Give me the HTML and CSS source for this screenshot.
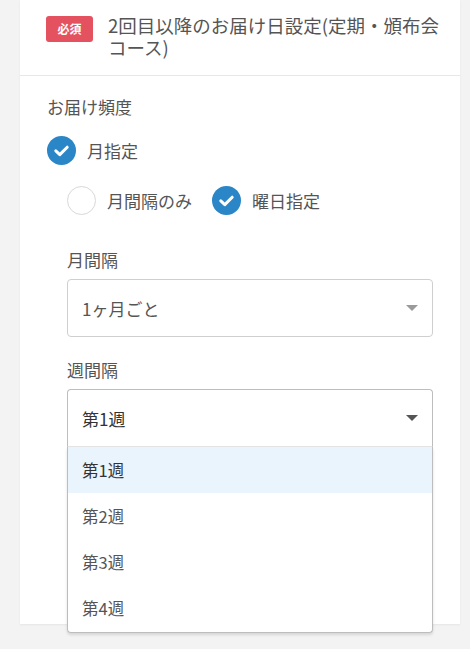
FILE: index.html
```html
<!DOCTYPE html>
<html lang="ja">
<head>
<meta charset="utf-8">
<link rel="stylesheet" href="styles.css">
</head>
<body>
<div class="card">
  <div class="head">
    <span class="badge">必須</span>
    <h2 class="title">2回目以降のお届け日設定(定期・頒布会コース)</h2>
  </div>
  <div class="body">
    <div class="label">お届け頻度</div>
    <div class="radio-row">
      <span class="radio checked"><svg viewBox="0 0 29 29" width="29" height="29"><circle cx="14.5" cy="14.5" r="14.5" fill="#2a86c6"/><path d="M8.8 14.8 L12.8 18.6 L20.2 11.2" fill="none" stroke="#fff" stroke-width="3" stroke-linecap="round" stroke-linejoin="round"/></svg></span>
      <span class="radio-text">月指定</span>
    </div>
    <div class="radio-row sub">
      <span class="radio empty"></span>
      <span class="radio-text">月間隔のみ</span>
      <span class="radio checked second"><svg viewBox="0 0 29 29" width="29" height="29"><circle cx="14.5" cy="14.5" r="14.5" fill="#2a86c6"/><path d="M8.8 14.8 L12.8 18.6 L20.2 11.2" fill="none" stroke="#fff" stroke-width="3" stroke-linecap="round" stroke-linejoin="round"/></svg></span>
      <span class="radio-text">曜日指定</span>
    </div>
    <div class="field">
      <div class="flabel">月間隔</div>
      <div class="select">
        <span class="value">1ヶ月ごと</span>
        <span class="arrow light"></span>
      </div>
    </div>
    <div class="field">
      <div class="flabel">週間隔</div>
      <div class="dropwrap">
        <div class="select open">
          <span class="value dark">第1週</span>
          <span class="arrow"></span>
        </div>
        <ul class="options">
          <li class="opt active">第1週</li>
          <li class="opt">第2週</li>
          <li class="opt">第3週</li>
          <li class="opt">第4週</li>
        </ul>
      </div>
    </div>
  </div>
</div>
</body>
</html>
```
FILE: styles.css
```css
* { box-sizing: border-box; }
html, body { margin: 0; padding: 0; }
body {
  background: #f3f3f4;
  font-family: "Noto Sans CJK JP", "Noto Sans", sans-serif;
  color: #555;
  width: 470px;
  height: 649px;
  overflow: hidden;
}
.card {
  margin: 0 20px;
  width: 440px;
  background: #fff;
  box-shadow: 0 1px 2px rgba(0,0,0,0.06);
}
.head {
  display: flex;
  align-items: flex-start;
  padding: 14px 16px 17px 26px;
  gap: 15px;
}
.badge {
  flex: none;
  margin-top: 2px;
  width: 47px;
  height: 26px;
  border-radius: 3px;
  background: #e4525f;
  color: #fff;
  font-size: 12px;
  font-weight: 700;
  line-height: 26px;
  text-align: center;
}
.title {
  margin: 0;
  font-size: 18.5px;
  font-weight: 400;
  line-height: 22px;
  color: #555;
}
.body {
  border-top: 1px solid #e8e8e8;
  padding: 19px 27px 177px 27px;
}
.label {
  font-size: 17px;
  line-height: 24px;
  color: #555;
}
.radio-row {
  display: flex;
  align-items: center;
  margin-top: 17px;
  height: 29px;
}
.radio-row.sub {
  margin-top: 21px;
  padding-left: 20px;
}
.radio {
  flex: none;
  width: 29px;
  height: 29px;
  display: block;
}
.radio svg { display: block; }
.radio.empty {
  border: 1.5px solid #d8d8d8;
  border-radius: 50%;
  background: #fff;
}
.radio.second { margin-left: 20px; }
.radio-text {
  margin-left: 11px;
  font-size: 17px;
  line-height: 24px;
  color: #555;
}
.field {
  padding-left: 20px;
  margin-top: 33px;
}
.field + .field { margin-top: 21px; }
.flabel {
  font-size: 17px;
  line-height: 24px;
  color: #555;
  margin-bottom: 7px;
}
.select {
  position: relative;
  height: 58px;
  border: 1px solid #cfcfcf;
  border-radius: 4px;
  display: flex;
  align-items: center;
  padding-left: 14px;
  background: #fff;
}
.value {
  font-size: 17px;
  color: #555;
}
.value.dark { color: #333; }
.arrow {
  position: absolute;
  right: 14px;
  top: 50%;
  margin-top: -3px;
  width: 0;
  height: 0;
  border-left: 6px solid transparent;
  border-right: 6px solid transparent;
  border-top: 6px solid #555;
}
.arrow.light { border-top-color: #9a9a9a; }
.dropwrap { position: relative; }
.select.open {
  border-color: #bdbdbd;
  border-radius: 4px 4px 0 0;
  border-bottom: 1px solid #e4e4e4;
}
.options {
  position: absolute;
  z-index: 2;
  left: 0;
  right: 0;
  top: 58px;
  margin: 0;
  padding: 0 0 1px;
  list-style: none;
  background: #fff;
  border: 1px solid #bdbdbd;
  border-top: none;
  border-radius: 0 0 4px 4px;
  box-shadow: 0 2px 3px rgba(0,0,0,0.12);
}
.opt {
  height: 46px;
  display: flex;
  align-items: center;
  padding-left: 14px;
  font-size: 16.5px;
  color: #555;
}
.opt.active {
  background: #eaf4fd;
  color: #333;
}
```
